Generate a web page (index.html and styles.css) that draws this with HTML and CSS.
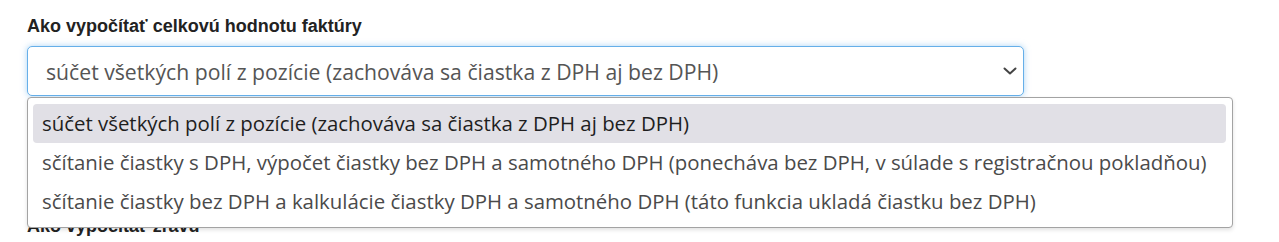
FILE: index.html
```html
<!DOCTYPE html>
<html lang="sk">
<head>
  <meta charset="UTF-8">
  <title>Nastavenia faktúry</title>
  <meta name="viewport" content="width=device-width, initial-scale=1.0">
  <link rel="stylesheet" href="styles.css">
</head>
<body>
  <div class="form">
    <div class="form-group">
      <label class="field-label">Ako vypočítať celkovú hodnotu faktúry</label>
      <div class="select-wrap">
        <div class="select is-open">
          <span class="select-value">súčet všetkých polí z pozície (zachováva sa čiastka z DPH aj bez DPH)</span>
          <svg class="chevron" width="14" height="8" viewBox="0 0 14 8">
            <path d="M1.5 1.5 L7 6.5 L12.5 1.5" fill="none" stroke="#444" stroke-width="2" stroke-linecap="round" stroke-linejoin="round"/>
          </svg>
        </div>
        <ul class="listbox">
          <li class="option selected">súčet všetkých polí z pozície (zachováva sa čiastka z DPH aj bez DPH)</li>
          <li class="option">sčítanie čiastky s DPH, výpočet čiastky bez DPH a samotného DPH (ponecháva bez DPH, v súlade s registračnou pokladňou)</li>
          <li class="option">sčítanie čiastky bez DPH a kalkulácie čiastky DPH a samotného DPH (táto funkcia ukladá čiastku bez DPH)</li>
        </ul>
      </div>
    </div>

    <div class="form-group second">
      <label class="field-label">Ako vypočítať zľavu</label>
    </div>
  </div>
</body>
</html>
```

FILE: styles.css
```css
body {
  margin: 0;
  background: #fff;
  font-family: 'Open Sans', 'Noto Sans', sans-serif;
  color: #333;
}

.form {
  padding: 16px 27px 0;
  width: 997px;
}

.field-label {
  display: block;
  font-family: 'Liberation Sans', Arial, sans-serif;
  font-weight: bold;
  font-size: 18px;
  line-height: 20px;
  color: #222;
  margin-bottom: 10px;
}

.select-wrap {
  position: relative;
}

.select {
  height: 50px;
  box-sizing: border-box;
  border: 1px solid #66afe9;
  border-radius: 5px;
  box-shadow: 0 0 6px rgba(102, 175, 233, 0.55);
  display: flex;
  align-items: center;
  justify-content: space-between;
  padding: 0 6px 0 18px;
  background: #fff;
}

.select-value {
  font-size: 21.2px;
  color: #555;
}

.chevron {
  display: block;
}

.listbox {
  position: absolute;
  top: 51px;
  left: 0;
  width: 1206px;
  box-sizing: border-box;
  margin: 0;
  padding: 6px 6px 6px 5px;
  list-style: none;
  background: #fff;
  border: 1px solid #a3a3a3;
  border-radius: 4px;
  box-shadow: 0 2px 4px rgba(0, 0, 0, 0.12);
  z-index: 2;
}

.option {
  height: 39px;
  line-height: 39px;
  padding-left: 9px;
  font-size: 20.4px;
  color: #4a4a4a;
  border-radius: 4px;
  white-space: nowrap;
}

.option.selected {
  background: #e1e0e6;
  color: #1e1e1e;
}

.second {
  margin-top: 120px;
}
```
